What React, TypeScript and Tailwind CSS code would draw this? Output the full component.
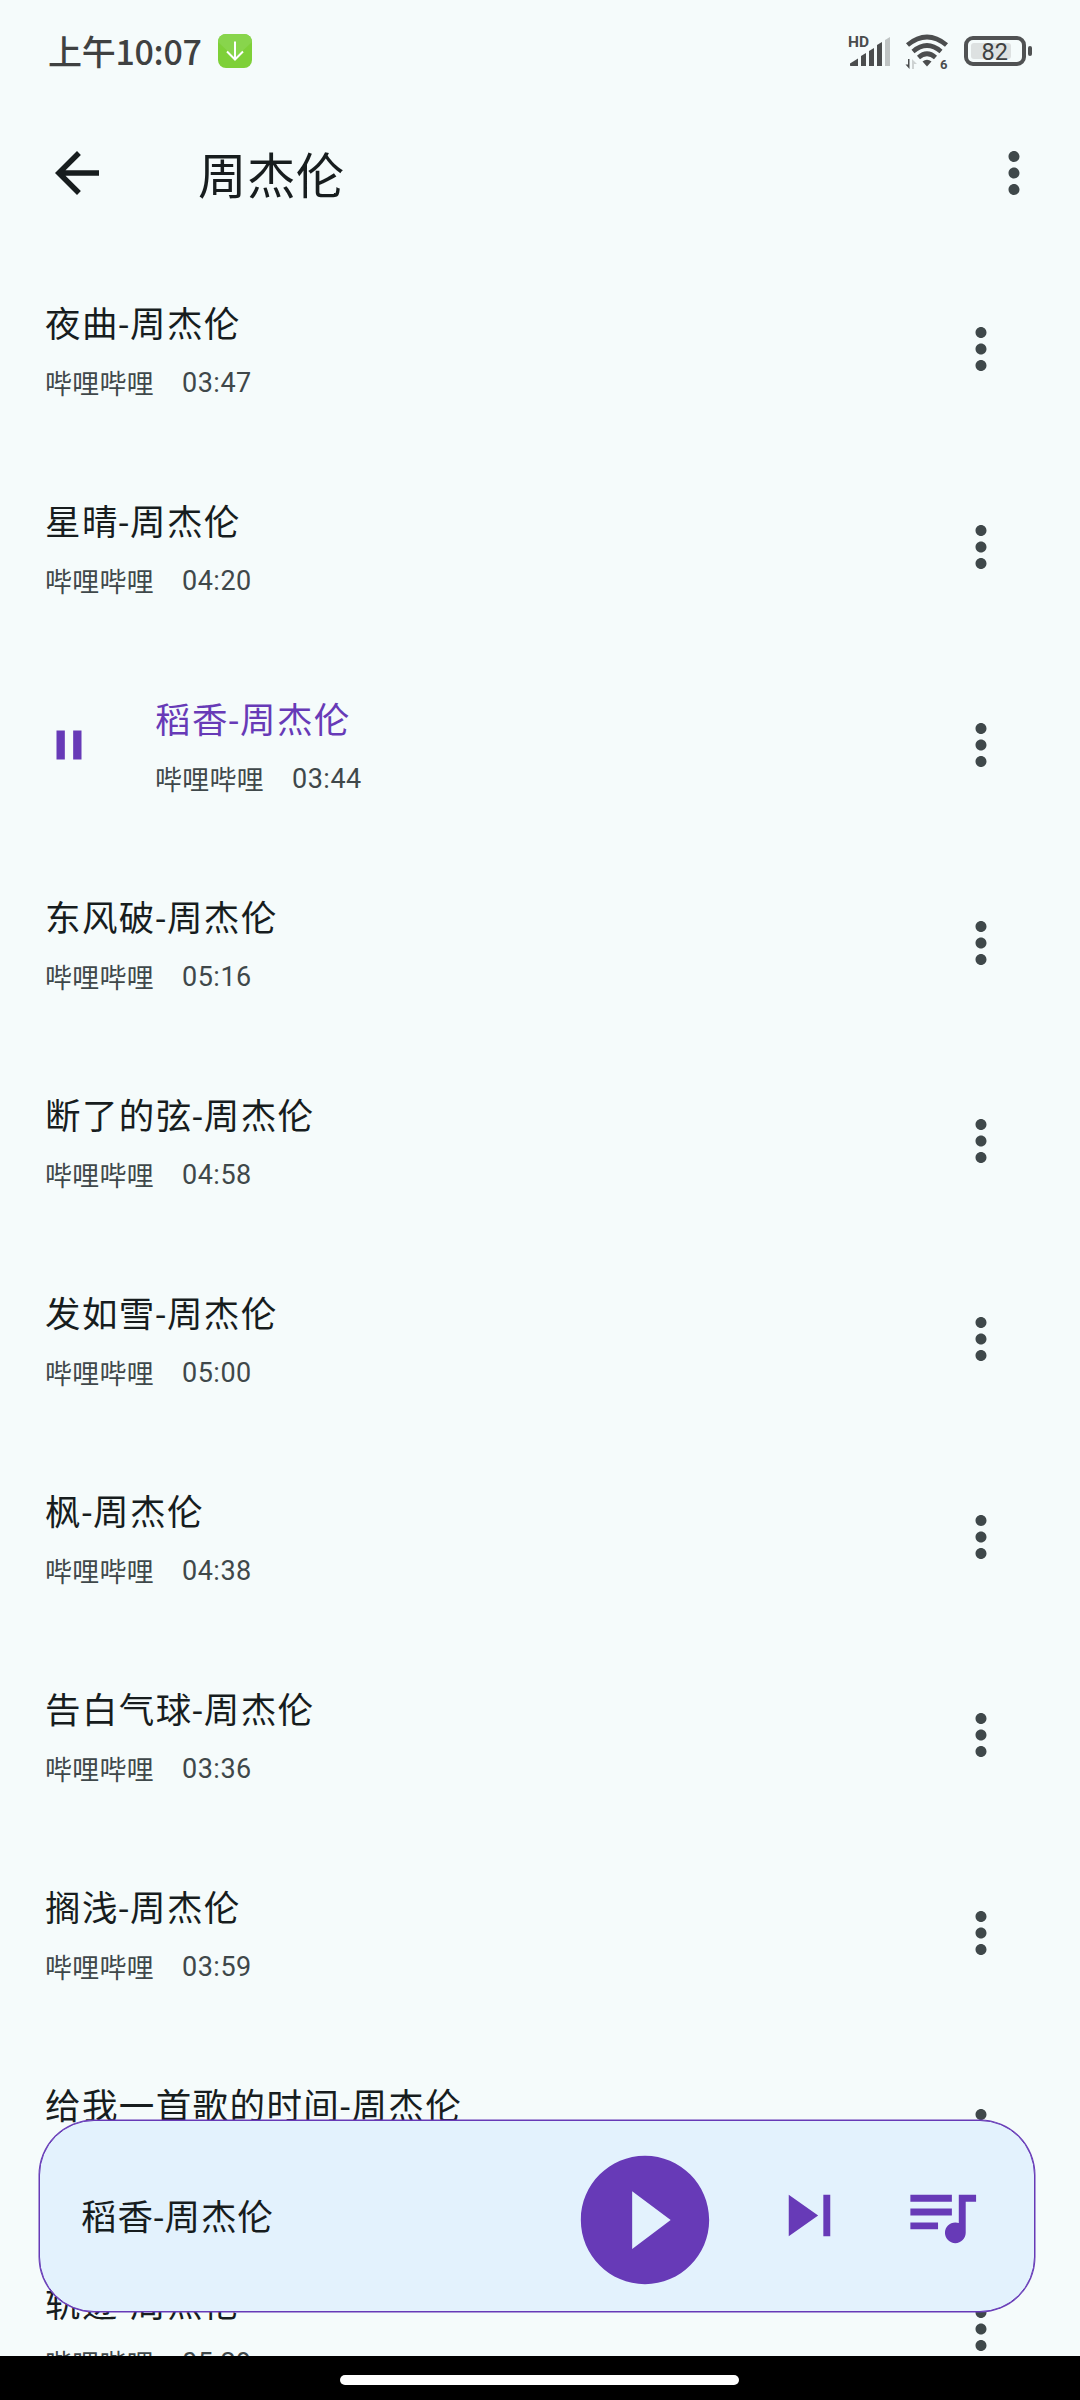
import {
  MdArrowBack,
  MdMoreVert,
  MdPause,
  MdPlayCircleFilled,
  MdQueueMusic,
  MdSkipNext,
} from "react-icons/md";

const songs = [
  { title: "夜曲-周杰伦", time: "03:47" },
  { title: "星晴-周杰伦", time: "04:20" },
  { title: "稻香-周杰伦", time: "03:44", playing: true },
  { title: "东风破-周杰伦", time: "05:16" },
  { title: "断了的弦-周杰伦", time: "04:58" },
  { title: "发如雪-周杰伦", time: "05:00" },
  { title: "枫-周杰伦", time: "04:38" },
  { title: "告白气球-周杰伦", time: "03:36" },
  { title: "搁浅-周杰伦", time: "03:59" },
  { title: "给我一首歌的时间-周杰伦", time: "04:13" },
  { title: "轨迹-周杰伦", time: "05:29" },
];

function SignalIcon() {
  return (
    <svg width="44" height="34" viewBox="0 0 44 34" fill="#4b4d4e">
      <text x="0" y="12.500" fontSize="15.5" fontWeight="700" fontFamily="Roboto, sans-serif">HD</text>
      <path d="M2 31.5V29.500L10 24.500V32H2.500Z" />
      <path d="M13 32V22L18 19V32Z" />
      <path d="M21 32V17L26 14V32Z" />
      <path d="M29 32V11L34 8V32Z" />
      <path d="M37 32V6L42 3V32Z" fill="#bfc4c4" />
    </svg>
  );
}

function WifiIcon() {
  return (
    <svg width="44" height="36" viewBox="0 0 44 36" fill="none" stroke="#4b4d4e">
      <path d="M2.500 11Q22 -5 41.500 11" strokeWidth="4.800" />
      <path d="M8 17.500Q22 5.500 36 17.500" strokeWidth="4.600" />
      <path d="M13.500 23.500Q22 16 30.500 23.500" strokeWidth="4.600" />
      <path d="M17.500 27.500Q22 24 26.500 27.500L22 32.500Z" fill="#4b4d4e" stroke="none" />
      <path d="M4.500 25V35L0.500 30.500H3V25Z" fill="#4b4d4e" stroke="none" />
      <path d="M7 35V25L12 30H9V35Z" fill="#cdd2d2" stroke="none" />
      <text x="35" y="34.500" fontSize="13" fontWeight="700" fill="#4b4d4e" stroke="none" fontFamily="Roboto, sans-serif">6</text>
    </svg>
  );
}

function StatusBar() {
  return (
    <div className="flex h-24 items-start justify-between px-12 pt-[34px]">
      <div className="flex items-center">
        <span className="w-[170px] whitespace-nowrap font-['Noto_Sans_CJK_SC',sans-serif] text-[34px] font-medium leading-[34px] tracking-[-0.3px] text-[#3f4141]">
          上午10:07
        </span>
        <svg width="34" height="34" viewBox="0 0 34 34">
          <rect width="34" height="34" rx="8" fill="#7ed038" />
          <path d="M0 8L17 24L34 8V8A8 8 0 0 0 26 0H8A8 8 0 0 0 0 8Z" fill="#88d54c" />
          <path d="M17 7.500V25M9 17.500L17 25.500L25 17.500" fill="none" stroke="#fff" strokeWidth="2" />
        </svg>
      </div>
      <div className="flex items-start">
        <SignalIcon />
        <div className="ml-[13px]">
          <WifiIcon />
        </div>
        <div className="ml-[15px] mt-0.5 flex items-center">
          <div className="h-[30px] w-[62px] rounded-[9px] border-4 border-[#505253] p-[3px]">
            <div className="flex h-4 w-10 items-center justify-end rounded-[3px] bg-[#dde1e1] pr-[3px]">
              <span className="pt-0.5 font-[Roboto,sans-serif] text-[23.500px] leading-4 text-[#3f4141]">82</span>
            </div>
          </div>
          <div className="ml-0.5 h-2.5 w-1 rounded-sm bg-[#505253]" />
        </div>
      </div>
    </div>
  );
}

function SongRow({ title, time, playing }: { title: string; time: string; playing?: boolean }) {
  return (
    <li className="flex h-[198px] shrink-0 items-center justify-between pl-11 pr-[66px]">
      <div className="flex items-center">
        {playing && <MdPause className="mr-[60px] size-[50px] text-[#673ab7]" />}
        <div className="whitespace-nowrap pl-px pt-3">
          <p className={`text-[35.500px] leading-[60px] tracking-[1.4px] ${playing ? "text-[#673ab7]" : "text-[#171d1e]"}`}>
            {title}
          </p>
          <p className="flex text-[26.900px] leading-[60px] tracking-[0.4px] text-[#3f484a]">
            <span className="w-[137px]">哔哩哔哩</span>
            <span className="-mt-0.5 text-[27px] tracking-[0.5px]">{time}</span>
          </p>
        </div>
      </div>
      <MdMoreVert className="size-[66px] text-[#3f484a]" />
    </li>
  );
}

export default function App() {
  return (
    <div className="relative flex h-[2400px] w-[1080px] flex-col overflow-hidden bg-[#f5fbfb] font-[Roboto,'Noto_Sans_CJK_SC',sans-serif]">
      <StatusBar />
      <header className="flex h-[154px] items-center pl-11 pr-[33px]">
        <MdArrowBack className="size-[66px] text-[#171d1e]" />
        <h1 className="ml-[88px] flex-1 pt-2.5 text-[48.400px] leading-[66px] tracking-[0.5px] text-[#171d1e]">周杰伦</h1>
        <MdMoreVert className="size-[66px] text-[#3f484a]" />
      </header>

      <ul className="flex min-h-0 flex-1 flex-col overflow-hidden">
        {songs.map((song) => (
          <SongRow key={song.title} {...song} />
        ))}
      </ul>

      {/* mini player floats over the list */}
      <div className="absolute left-[39px] top-[2120px] flex h-48 w-[996px] items-center rounded-[55px] border border-[#673ab7] bg-[#e3f2fd] pl-[41px] shadow-[0_0_0_0.5px_#673ab7]">
        <span className="flex-1 pt-1 text-[35.500px] leading-[60px] tracking-[0.9px] text-[#171d1e]">稻香-周杰伦</span>
        <MdPlayCircleFilled className="mt-2 size-[154px] text-[#673ab7]" />
        <MdSkipNext className="mb-0.5 ml-[46px] size-[83px] text-[#673ab7]" />
        <MdQueueMusic className="mb-0.5 ml-[49px] mr-[51px] size-[83px] text-[#673ab7]" />
      </div>

      <div className="flex h-11 shrink-0 items-center justify-center bg-black pt-4 pb-3 pr-px">
        <div className="h-2.5 w-[399px] rounded-full bg-white" />
      </div>
    </div>
  );
}
